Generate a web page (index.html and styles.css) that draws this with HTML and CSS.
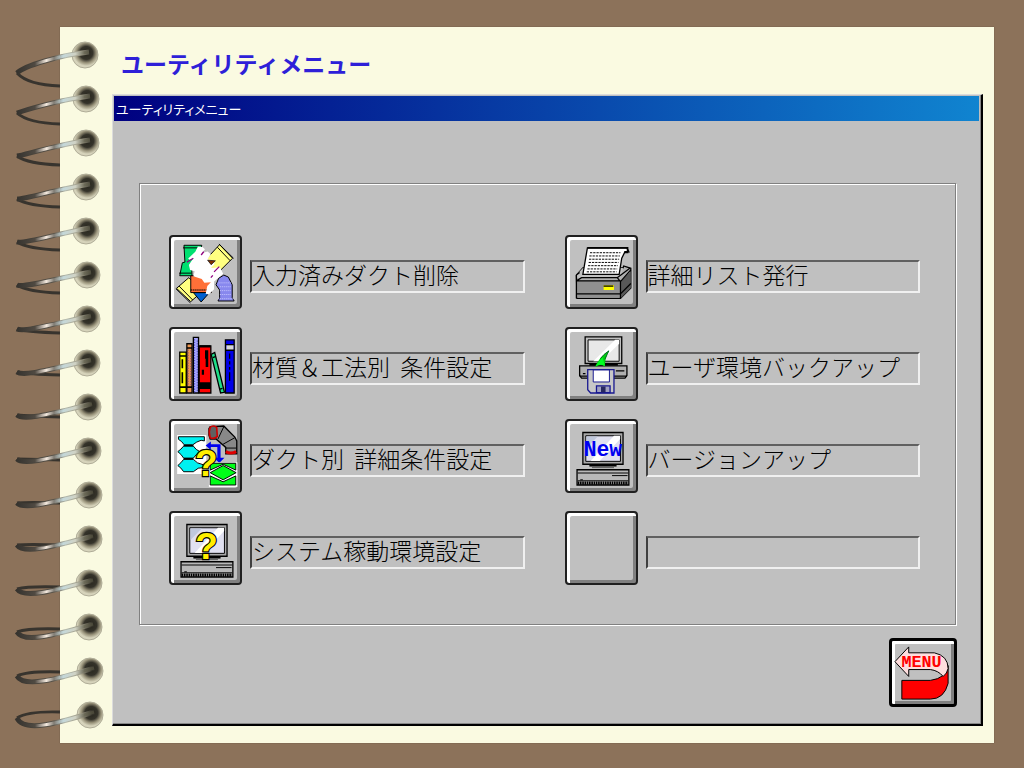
FILE: index.html
```html
<!DOCTYPE html>
<html lang="ja">
<head>
    <meta charset="UTF-8">
    <meta name="viewport" content="width=device-width, initial-scale=1.0">
    <title>ユーティリティメニュー</title>
    <link rel="stylesheet" href="styles.css">
</head>
<body>
    <svg class="spiral" id="spiral" width="110" height="768" viewBox="0 0 110 768" aria-hidden="true">
        <defs>
            <radialGradient id="hole" cx="55%" cy="42%">
                <stop offset="0" stop-color="#25241b"/>
                <stop offset="0.5" stop-color="#35332a"/>
                <stop offset="0.75" stop-color="#969078"/>
                <stop offset="1" stop-color="#d6d3bb"/>
            </radialGradient>
            <linearGradient id="wire" gradientUnits="userSpaceOnUse" x1="16" y1="0" x2="92" y2="0">
                <stop offset="0" stop-color="#34322e"/>
                <stop offset="0.25" stop-color="#504a42"/>
                <stop offset="0.4" stop-color="#f4e9de"/>
                <stop offset="0.5" stop-color="#807c74"/>
                <stop offset="0.62" stop-color="#c4d8da"/>
                <stop offset="0.78" stop-color="#d0d2c4"/>
                <stop offset="0.9" stop-color="#6c6a58"/>
                <stop offset="1" stop-color="#4b493a"/>
            </linearGradient>
            <linearGradient id="edge" gradientUnits="userSpaceOnUse" x1="16" y1="0" x2="92" y2="0">
                <stop offset="0" stop-color="#38342e"/>
                <stop offset="0.5" stop-color="#5c564c"/>
                <stop offset="0.65" stop-color="#b4baae"/>
                <stop offset="0.85" stop-color="#a09c88"/>
                <stop offset="1" stop-color="#35332a"/>
            </linearGradient>
        </defs>
    </svg>

    <main class="paper">
        <h1>ユーティリティメニュー</h1>
        <section class="window">
            <h2 class="titlebar">ユーティリティメニュー</h2>
            <div class="panel">
                <div class="item">
                    <button type="button" id="delete">
                        <svg viewBox="15 18 213 213">
                            <path d="M55 42L110 42L98 96L78 96L80 136L42 136L50 96L58 94Z" fill="#00e070" stroke="#000" stroke-width="3"/>
                            <path d="M52 50H108M40 128H78" stroke="#000" stroke-width="3"/>
                            <path d="M165 40L205 82L155 132L117 92Z" fill="#ffff80" stroke="#000" stroke-width="3"/>
                            <path d="M158 48L198 90M163 38L208 82" stroke="#000" stroke-width="3"/>
                            <path d="M32 175L70 142L112 184L76 216Z" fill="#ffff80" stroke="#000" stroke-width="3"/>
                            <path d="M40 168L82 211M30 176L75 220" stroke="#000" stroke-width="3"/>
                            <path d="M84 188L108 217L134 188Z" fill="#0060d0" stroke="#000" stroke-width="3"/>
                            <path d="M76 136H140V188H76Z" fill="#ff7038" stroke="#000" stroke-width="3"/>
                            <path d="M76 180H136" stroke="#000" stroke-width="5" stroke-dasharray="3 3"/>
                            <path d="M154 164L162 144L178 134L192 140L204 164V204L210 214H160L165 204V180Z" fill="#8888ee" stroke="#000" stroke-width="3"/>
                            <path d="M162 158H200M166 170H202M166 182H202M166 194H202M160 207H210" stroke="#c8c8ff" stroke-width="3" stroke-dasharray="3 3"/>
                            <path d="M98 46L112 47L120 54L110 66L128 61L138 70L128 85L150 90L148 102L138 112L166 110L176 130L148 154L148 178L132 194L122 192L127 168L138 156L118 158L110 146L84 138L88 122L74 118L70 103L84 82L74 88L68 83L90 62Z" fill="#fff"/>
                            <path d="M128 88L152 90L139 102Z" fill="#803000" stroke="#000" stroke-width="2"/>
                            <path d="M64 94L84 82M108 72L116 62M148 124L164 108M138 142L144 135" stroke="#900080" stroke-width="4"/>
                        </svg>
                    </button>
                    <label for="delete">入力済みダクト削除</label>
                </div>
                <div class="item">
                    <button type="button" id="list">
                        <svg viewBox="15 18 213 213">
                            <path d="M44 134L64 112H188L190 106L212 113V174L180 206H46Z" fill="#b0b0b0" stroke="#000" stroke-width="4"/>
                            <path d="M46 150H178V204H46Z" fill="#909090"/>
                            <path d="M44 134L64 112H188L180 142H44Z" fill="#c0c0c0"/>
                            <path d="M180 154L212 122V174L180 206Z" fill="#585858"/>
                            <path d="M44 152L60 142H170L180 154L212 118M44 152H180V206M46 192H180L212 160M44 134L54 126M170 142L210 112M44 134V206" fill="none" stroke="#000" stroke-width="4"/>
                            <path d="M64 132L78 50H200L206 62H194L184 82L176 132Z" fill="#fff" stroke="#000" stroke-width="4"/>
                            <path d="M78 50H202V64H192" fill="none" stroke="#000" stroke-width="5"/>
                            <path d="M86 65H180M84 75H178M83 85H176M82 95H174M80 105H172M78 115H170M76 124H168" stroke="#000" stroke-width="3" stroke-dasharray="7 3"/>
                            <path d="M128 165H160V180H128Z" fill="#ff0"/>
                            <path d="M128 168H158" stroke="#000" stroke-width="4"/>
                        </svg>
                    </button>
                    <label for="list">詳細リスト発行</label>
                </div>
                <div class="item">
                    <button type="button" id="material">
                        <svg viewBox="15 18 213 213">
                            <path d="M42 88H62V214H42Z" fill="#ff0" stroke="#000" stroke-width="4"/>
                            <path d="M42 100H62M42 196H62M50 110V138M50 150V184" stroke="#000" stroke-width="5"/>
                            <path d="M64 62H80V214H64Z" fill="#f09850" stroke="#000" stroke-width="4"/>
                            <path d="M64 75H80M64 196H80" stroke="#000" stroke-width="5"/>
                            <path d="M68 80V192M76 82V192" stroke="#805080" stroke-width="3" stroke-dasharray="4 4"/>
                            <path d="M84 42H100V214H84Z" fill="#a8a8ff" stroke="#000" stroke-width="4"/>
                            <path d="M88 48V212M96 52V212" stroke="#4040b0" stroke-width="3" stroke-dasharray="4 4"/>
                            <path d="M102 69H138V214H102Z" fill="red" stroke="#000" stroke-width="4"/>
                            <path d="M103 70H137M103 184H137M103 198H137" stroke="#000" stroke-width="7"/>
                            <path d="M103 184H137V200H103ZM120 82H130V134H122V108H120ZM110 142H117V158H110Z"/>
                            <path d="M139 95L150 89L180 212L168 214Z" fill="#20dd88" stroke="#000" stroke-width="4"/>
                            <path d="M144 105L152 102M166 202L174 200" stroke="#000" stroke-width="4"/>
                            <path d="M183 50H210V214H183Z" fill="#0000e8" stroke="#000" stroke-width="4"/>
                            <path d="M186 66H208V82H186Z" fill="#d8d8d8"/>
                            <path d="M183 65H210M183 82H210M196 92V108M196 116V126M196 134V142M196 150V176" stroke="#000" stroke-width="4"/>
                        </svg>
                    </button>
                    <label for="material">材質＆工法別  条件設定</label>
                </div>
                <div class="item">
                    <button type="button" id="backup">
                        <svg viewBox="15 18 213 213">
                            <path d="M71 41H184V123H71Z" fill="#c0c0c0" stroke="#000" stroke-width="4"/>
                            <path d="M80 50H176V116H80Z" fill="#e8e8e8" stroke="#000" stroke-width="3"/>
                            <path d="M96 116L164 50H176V62L120 116Z" fill="#fff"/>
                            <path d="M84 122H172V130H84Z"/>
                            <path d="M54 130H200V160L194 168H60L54 160Z" fill="#b0b0b0" stroke="#000" stroke-width="4"/>
                            <path d="M166 146H192M64 154H72M54 162H200" stroke="#000" stroke-width="4"/>
                            <path d="M79 142H160V214H88L79 204Z" fill="#c8c8c8" stroke="#181890" stroke-width="4"/>
                            <path d="M96 143H146V180H96Z" fill="#fff" stroke="#181890" stroke-width="3"/>
                            <path d="M106 192H148V213H106Z" fill="#a0a0c0" stroke="#181890" stroke-width="4"/>
                            <path d="M120 194H134V212H120Z" fill="#282860"/>
                            <path d="M102 134Q112 104 144 84Q132 104 132 132Q118 122 102 134Z" fill="#00cc10"/>
                            <path d="M102 133Q116 122 132 131L125 104L112 118Z" fill="#00ff20"/>
                            <path d="M118 108Q128 94 144 84L132 110" fill="none" stroke="#006820" stroke-width="3"/>
                        </svg>
                    </button>
                    <label for="backup">ユーザ環境バックアップ</label>
                </div>
                <div class="item">
                    <button type="button" id="duct">
                        <svg viewBox="15 18 213 213">
                            <path d="M34 60H124V180H34Z" fill="#fff"/>
                            <path d="M38 65H118V78L108 76Q94 80 82 90H56Q48 78 38 73Z" fill="#00f0f0" stroke="#000" stroke-width="3"/>
                            <path d="M36 111Q46 104 54 94H84Q92 106 104 111Q92 120 84 131H54Q46 118 36 111Z" fill="#00f0f0" stroke="#000" stroke-width="3"/>
                            <path d="M36 154Q46 146 54 135H84Q94 148 116 152V160Q98 158 84 173H54Q46 160 36 154Z" fill="#00f0f0" stroke="#000" stroke-width="3"/>
                            <path d="M54 92H84M54 133H84" stroke="#000" stroke-width="5"/>
                            <path d="M122 92L138 80V88H168V130H180L164 146L148 130H158V97H138V106Z" fill="#0000f0"/>
                            <path d="M136 34L178 32L212 66L218 78V118H184V98L154 72H136L132 60V40Z" fill="#888" stroke="#000" stroke-width="4"/>
                            <path d="M150 40L154 68M178 34L160 72M212 68L176 88M184 100H216" stroke="#000" stroke-width="3"/>
                            <path d="M136 36Q144 28 156 36L158 64Q148 74 136 68Q130 52 136 36Z" fill="#606060" stroke="#d00000" stroke-width="5"/>
                            <path d="M184 111Q200 120 216 111" fill="none" stroke="#e00000" stroke-width="9"/>
                            <path d="M132 144H220V220H132Z" fill="#fff"/>
                            <path d="M136 147H215V168L176 150L136 168Z" fill="#00ff18" stroke="#000" stroke-width="3"/>
                            <path d="M136 176L176 154L216 176L176 198ZM136 186L176 204L215 186V214H136Z" fill="#00ff18" stroke="#000" stroke-width="3"/>
                            <text class="question" x="124" y="185" font-size="114">?</text>
                        </svg>
                    </button>
                    <label for="duct">ダクト別  詳細条件設定</label>
                </div>
                <div class="item">
                    <button type="button" id="version">
                        <svg viewBox="15 18 213 213">
                            <use href="#computer"/>
                            <text class="new" x="126" y="124">New</text>
                        </svg>
                    </button>
                    <label for="version">バージョンアップ</label>
                </div>
                <div class="item">
                    <button type="button" id="system">
                        <svg viewBox="15 18 213 213">
                            <g id="computer">
                                <path d="M64 52H188V150H64Z" fill="#a8a8a8" stroke="#000" stroke-width="4"/>
                                <path d="M73 62H180V141H73Z" fill="#e0e0f0" stroke="#000" stroke-width="3"/>
                                <path d="M88 140L160 62H179V72L116 140Z" fill="#fff"/>
                                <path d="M75 64H110L75 100Z" fill="#c0c8dc"/>
                                <path d="M84 150H168V157H84Z"/>
                                <path d="M92 158H160V162H92Z" fill="#666"/>
                                <path d="M46 167H206V214H46Z" fill="#b8b8b8" stroke="#000" stroke-width="4"/>
                                <path d="M48 177H204M48 201H204M154 185H202M56 198H64" stroke="#000" stroke-width="3"/>
                                <path d="M48 208H204" stroke="#000" stroke-width="10" stroke-dasharray="5 2"/>
                            </g>
                            <text class="question" x="125" y="158" font-size="114">?</text>
                        </svg>
                    </button>
                    <label for="system">システム稼動環境設定</label>
                </div>
                <div class="item">
                    <button type="button" id="blank" aria-label="未使用"></button>
                    <label for="blank"></label>
                </div>
            </div>
            <div class="footer">
                <button type="button" class="menu" aria-label="メニューへ戻る">
                    <svg viewBox="0 0 61 64">
                        <path d="M9 40H38Q54 38 56 25V43Q52 59 38 59H9Z" fill="red" stroke="#000"/>
                        <path d="M2 21L16 6V12H42Q56 15 56 28Q55 33 51 36Q46 30 38 29H16V36Z" fill="#ffdede" stroke="#000"/>
                        <text x="29" y="26">MENU</text>
                    </svg>
                </button>
            </div>
        </section>
    </main>

    <script src="script.js"></script>
</body>
</html>
```
FILE: styles.css
```css
* {
    box-sizing: border-box;
}
body {
    position: relative;
    margin: 0;
    min-height: 100vh;
    padding: 27px 30px 25px 60px;
    background-color: #8c725a;
    font-family: "Noto Sans CJK JP", sans-serif;
}
.spiral {
    position: absolute;
    left: 0;
    top: 0;
    pointer-events: none;
}
.paper {
    padding: 20px 11px 17px 52px;
    background-color: #fafae1;
    box-shadow: 0 0 1px #5c4c3c;
}
h1 {
    margin: 0 0 14px 9px;
    color: #2e1fd8;
    font-size: 23px;
    font-weight: 700;
    line-height: 33px;
}
.window {
    padding: 1px;
    background-color: #c0c0c0;
    border: 1px solid #dcdcdc;
    border-right: 2px solid #000;
    border-bottom: 2px solid #000;
    box-shadow: inset -1px -1px #888;
}
.titlebar {
    margin: 0 1px 0 0;
    padding-left: 2px;
    background: linear-gradient(to right, #000080, #1084d0);
    color: white;
    font-size: 13px;
    font-weight: 400;
    font-feature-settings: "palt";
    line-height: 25px;
}
.panel {
    display: grid;
    grid-template-columns: 1fr 1fr;
    gap: 18px 40px;
    margin: 62px 24px 0 25px;
    padding: 51px 35px 39px 29px;
    border: 1px solid #808080;
    box-shadow: inset 1px 1px #fff, 1px 1px #fff;
}
.item {
    display: flex;
    align-items: flex-start;
    gap: 8px;
}
button {
    flex: none;
    width: 73px;
    height: 74px;
    padding: 0;
    background-color: #c0c0c0;
    border: 2px solid #202020;
    border-radius: 4px;
    box-shadow: inset 3px 3px #fff, inset -3px -3px #808080;
    cursor: pointer;
}
button:active {
    box-shadow: inset 3px 3px #808080, inset -3px -3px #fff;
}
button svg {
    display: block;
    width: 100%;
    height: 100%;
}
label {
    flex: 1;
    height: 33px;
    margin-top: 25px;
    border: 2px solid;
    border-color: #606060 #f0f0f0 #f0f0f0 #404040;
    color: #000;
    font-size: 23px;
    font-weight: 300;
    line-height: 24px;
    white-space: pre;
}
.question {
    fill: #ffee00;
    stroke: #000;
    stroke-width: 7px;
    paint-order: stroke;
    font-family: "Liberation Sans", sans-serif;
    font-weight: 700;
    text-anchor: middle;
}
.new {
    fill: #0000f0;
    font-family: "Liberation Mono", monospace;
    font-size: 66px;
    font-weight: 700;
    text-anchor: middle;
}
.footer {
    display: flex;
    justify-content: flex-end;
    padding: 13px 23px 16px 0;
}
.menu {
    width: 68px;
    height: 69px;
    border: 3px solid #000;
}
.menu text {
    fill: red;
    font-family: "Liberation Mono", monospace;
    font-size: 17px;
    font-weight: 700;
    text-anchor: middle;
}
```
FILE: script.js
```js
// one entry per ring: hole x, tip drop, where the back of the wire ends
const rings = [
    [85, 18, 31], [86, 14, 25], [86, 13, 22], [86, 12, 20],
    [86, 11, 19], [87, 10, 18], [87, 10, 14], [87, 9, 12],
    [88, 8, 10], [88, 8, 9], [89, 8, 8], [89, 6, 6],
    [89, 6, 4], [89, 5, 2], [90, 5, 1], [90, 3, -3]
];
const spacing = 44;
const spiral = document.getElementById('spiral');

let shapes = '';
rings.forEach(([x, tip, back], i) => {
    const y = 55 + i * spacing;
    const low = 11 + i / 2;
    shapes += `
        <g transform="translate(0 ${y})" fill="none">
            <ellipse cx="${x}" cy="0" rx="13" ry="13" fill="url(#hole)" stroke="#b0ad98"/>
            <path d="M17 ${tip}Q28 ${back - 1} 60 ${back}" stroke="#38342e" stroke-width="3"/>
            <path d="M${x + 4} -3C60 ${i / 2} 24 ${low} 17 ${tip}" stroke="url(#edge)" stroke-width="5"/>
            <path d="M${x + 4} -3C60 ${i / 2} 24 ${low} 17 ${tip}" stroke="url(#wire)" stroke-width="3"/>
        </g>`;
});
spiral.insertAdjacentHTML('beforeend', shapes);
```
